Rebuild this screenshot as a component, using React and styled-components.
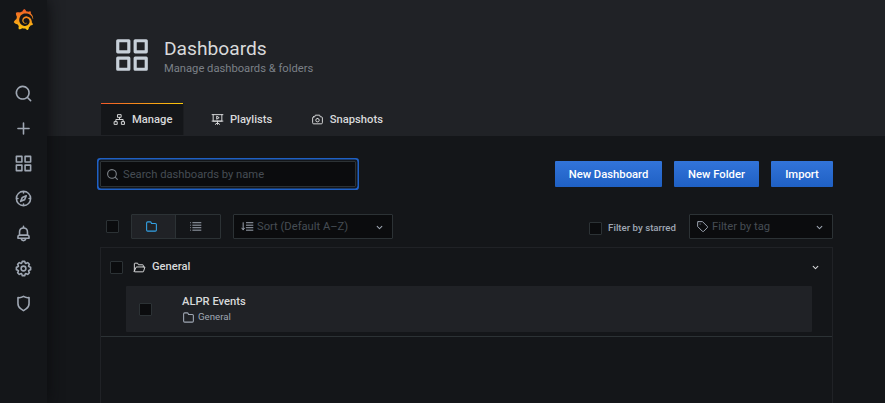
import React from "react";
import styled, { createGlobalStyle, css } from "styled-components";
import { SiGrafana } from "react-icons/si";

const Global = createGlobalStyle`
  * { box-sizing: border-box; }
  body { margin: 0; background: #141619; overflow: hidden; }
  body, button, input { font-family: Roboto, "Liberation Sans", sans-serif; }
`;

const solid = {
  search: "M21.71,20.29,18,16.61A9,9,0,1,0,16.61,18l3.68,3.68a1,1,0,0,0,1.42,0A1,1,0,0,0,21.71,20.29ZM11,18a7,7,0,1,1,7-7A7,7,0,0,1,11,18Z",
  plus: "M19,11H13V5a1,1,0,0,0-2,0v6H5a1,1,0,0,0,0,2h6v6a1,1,0,0,0,2,0V13h6a1,1,0,0,0,0-2Z",
  apps: "M10,13H3a1,1,0,0,0-1,1v7a1,1,0,0,0,1,1h7a1,1,0,0,0,1-1V14A1,1,0,0,0,10,13ZM9,20H4V15H9ZM21,2H14a1,1,0,0,0-1,1v7a1,1,0,0,0,1,1h7a1,1,0,0,0,1-1V3A1,1,0,0,0,21,2ZM20,9H15V4h5Zm1,4H14a1,1,0,0,0-1,1v7a1,1,0,0,0,1,1h7a1,1,0,0,0,1-1V14A1,1,0,0,0,21,13Zm-1,7H15V15h5ZM10,2H3A1,1,0,0,0,2,3v7a1,1,0,0,0,1,1h7a1,1,0,0,0,1-1V3A1,1,0,0,0,10,2ZM9,9H4V4H9Z",
  compass: "M12,2A10,10,0,1,0,22,12,10,10,0,0,0,12,2Zm1,17.93V19a1,1,0,0,0-2,0v.93A8,8,0,0,1,4.07,13H5a1,1,0,0,0,0-2H4.07A8,8,0,0,1,11,4.07V5a1,1,0,0,0,2,0V4.07A8,8,0,0,1,19.93,11H19a1,1,0,0,0,0,2h.93A8,8,0,0,1,13,19.93ZM15.14,7.55l-5,2.12a1,1,0,0,0-.52.52l-2.12,5a1,1,0,0,0,.21,1.1,1,1,0,0,0,.7.3.93.93,0,0,0,.4-.09l5-2.12a1,1,0,0,0,.52-.52l2.12-5a1,1,0,0,0-1.31-1.31Zm-2.49,5.1-2.28,1,1-2.28,2.28-1Z",
  bell: "M18,13.18V10a6,6,0,0,0-5-5.91V3a1,1,0,0,0-2,0V4.09A6,6,0,0,0,6,10v3.18A3,3,0,0,0,4,16v2a1,1,0,0,0,1,1H8.14a4,4,0,0,0,7.72,0H19a1,1,0,0,0,1-1V16A3,3,0,0,0,18,13.18ZM8,10a4,4,0,0,1,8,0v3H8Zm4,10a2,2,0,0,1-1.72-1h3.44A2,2,0,0,1,12,20Zm6-3H6V16a1,1,0,0,1,1-1H17a1,1,0,0,1,1,1Z",
  cog: "M21.32,9.55l-1.89-.63.89-1.78A1,1,0,0,0,20.13,6L18,3.87a1,1,0,0,0-1.15-.19l-1.78.89-.63-1.89A1,1,0,0,0,13.5,2h-3a1,1,0,0,0-.95.68L8.92,4.57,7.14,3.68A1,1,0,0,0,6,3.87L3.87,6a1,1,0,0,0-.19,1.15l.89,1.78-1.89.63A1,1,0,0,0,2,10.5v3a1,1,0,0,0,.68.95l1.89.63-.89,1.78A1,1,0,0,0,3.87,18L6,20.13a1,1,0,0,0,1.15.19l1.78-.89.63,1.89a1,1,0,0,0,.95.68h3a1,1,0,0,0,.95-.68l.63-1.89,1.78.89A1,1,0,0,0,18,20.13L20.13,18a1,1,0,0,0,.19-1.15l-.89-1.78,1.89-.63A1,1,0,0,0,22,13.5v-3A1,1,0,0,0,21.32,9.55ZM20,12.78l-1.2.4A2,2,0,0,0,17.64,16l.57,1.14-1.1,1.1L16,17.64a2,2,0,0,0-2.79,1.16l-.4,1.2H11.22l-.4-1.2A2,2,0,0,0,8,17.64l-1.14.57-1.1-1.1L6.36,16A2,2,0,0,0,5.2,13.18L4,12.78V11.22l1.2-.4A2,2,0,0,0,6.36,8L5.79,6.89l1.1-1.1L8,6.36A2,2,0,0,0,10.82,5.2l.4-1.2h1.56l.4,1.2A2,2,0,0,0,16,6.36l1.14-.57,1.1,1.1L17.64,8a2,2,0,0,0,1.16,2.79l1.2.4ZM12,8a4,4,0,1,0,4,4A4,4,0,0,0,12,8Zm0,6a2,2,0,1,1,2-2A2,2,0,0,1,12,14Z",
  shield: "M19.63,3.65a1,1,0,0,0-.84-.2,8,8,0,0,1-6.22-1.27,1,1,0,0,0-1.14,0A8,8,0,0,1,5.21,3.45a1,1,0,0,0-.84.2A1,1,0,0,0,4,4.43v7.45a9,9,0,0,0,3.77,7.33l3.65,2.6a1,1,0,0,0,1.16,0l3.65-2.6A9,9,0,0,0,20,11.88V4.43A1,1,0,0,0,19.63,3.65ZM18,11.88a7,7,0,0,1-2.93,5.7L12,19.77,8.93,17.58A7,7,0,0,1,6,11.88V5.58a10,10,0,0,0,6-1.39,10,10,0,0,0,6,1.39Z",
  folder: "M19,5.5H12.72l-.32-1a3,3,0,0,0-2.84-2H5a3,3,0,0,0-3,3v13a3,3,0,0,0,3,3H19a3,3,0,0,0,3-3V8.5A3,3,0,0,0,19,5.5Zm1,13a1,1,0,0,1-1,1H5a1,1,0,0,1-1-1V5.5a1,1,0,0,1,1-1H9.56a1,1,0,0,1,.95.68l.54,1.64A1,1,0,0,0,12,7.5h7a1,1,0,0,1,1,1Z",
  down: "M17,9.17a1,1,0,0,0-1.41,0L12,12.71,8.46,9.17a1,1,0,0,0-1.41,0,1,1,0,0,0,0,1.42l4.24,4.24a1,1,0,0,0,1.42,0L17,10.59A1,1,0,0,0,17,9.17Z",
};

const outline = {
  sitemap: "M9 3h6v5H9zM2.8 16h5v5h-5zM16.2 16h5v5h-5zM12 8v4M5.3 16v-4h13.4v4",
  play: "M2 3h20M4 3v12h16V3M2 15h20M12 15v6M8 21l4-3 4 3M10.5 6.5v5l4-2.5z",
  camera: "M5 7h2l1-3h8l1 3h2a2 2 0 0 1 2 2v9a2 2 0 0 1-2 2H5a2 2 0 0 1-2-2V9a2 2 0 0 1 2-2zM12 10a3.2 3.2 0 1 0 0 6.4 3.2 3.2 0 0 0 0-6.4z",
  list: "M3 5h.1M7 5h15M3 9.6h.1M7 9.6h15M3 14.2h.1M7 14.2h15M3 18.8h.1M7 18.8h15",
  sort: "M4 5v13M1.5 15l2.5 3 2.5-3M10 5h12M10 9.6h12M10 14.2h12M10 18.8h12",
  tag: "M4 3h8l9 9a1.5 1.5 0 0 1 0 2l-7 7a1.5 1.5 0 0 1-2 0l-9-9V4a1 1 0 0 1 1-1zM7.5 7.5h.1",
  open: "M2.5 18V5a1 1 0 0 1 1-1h5l1.5 3h8a1 1 0 0 1 1 1v3M2.5 18.5l3.5-7.5h16l-2.6 8.5a1 1 0 0 1-1 .5h-15a1 1 0 0 1-.9-1.5z",
};

const Svg = styled.svg`
  display: block;
  flex: none;
  width: ${(p) => p.$size}px;
  height: ${(p) => p.$size}px;
  color: ${(p) => p.$color || "inherit"};
`;

function Icon({ name, size = 16, color, weight = 1.8 }) {
  return (
    <Svg viewBox="0 0 24 24" $size={size} $color={color} aria-hidden="true">
      {solid[name] ? (
        <path d={solid[name]} fill="currentColor" />
      ) : (
        <path d={outline[name]} fill="none" stroke="currentColor" strokeWidth={weight} strokeLinecap="round" strokeLinejoin="round" />
      )}
    </Svg>
  );
}

const Shell = styled.div`
  display: flex;
  height: 403px;
  overflow: hidden;
  background: #141619;
  color: #d8d9da;
`;

const Sidebar = styled.nav`
  display: flex;
  flex-direction: column;
  align-items: center;
  flex: none;
  width: 47px;
  padding-top: 9px;
  background: #141619;
  box-shadow: 0 0 16px #0b0c0e;
  z-index: 1;
  color: #9fa7b3;
`;

const Logo = styled(SiGrafana)`
  width: 21px;
  height: 21px;
  margin-bottom: 46px;
  path { fill: url(#flame); }
`;

const Defs = styled.svg`
  display: block;
  width: 0;
  height: 0;
`;

const NavButton = styled.a`
  display: grid;
  place-items: center;
  width: 47px;
  height: 35px;
`;

const Main = styled.main`
  flex: 1;
  display: flex;
  flex-direction: column;
`;

const Header = styled.header`
  height: 136px;
  flex: none;
  padding-left: 54px;
  background: #202226;
`;

const Heading = styled.div`
  display: flex;
  gap: 13px;
  height: 103px;
  padding: 36px 0 0 12px;
`;

const Title = styled.h1`
  margin: 0;
  padding-top: 1px;
  font-size: 19.2px;
  font-weight: 400;
  line-height: 24px;
`;

const Subtitle = styled.div`
  font-size: 11.2px;
  line-height: 15px;
  color: #7b8087;
`;

const Tabs = styled.div`
  display: flex;
  gap: 14.5px;
`;

const Tab = styled.a`
  display: flex;
  align-items: center;
  gap: 6px;
  height: 32px;
  padding: 0 12px;
  font-size: 11.2px;
  font-weight: 500;
  ${(p) => p.$active && css`
    padding-top: 1px;
    background: linear-gradient(90deg, #f05a28, #fbca0a) top / 100% 1px no-repeat, #141619;
    box-shadow: inset -1px 0 #1b1d20;
  `}
`;

const Content = styled.section`
  flex: 1;
  display: flex;
  flex-direction: column;
  width: 733px;
  margin-left: 53px;
  padding-top: 25px;
`;

const Actions = styled.div`
  display: flex;
  align-items: center;
  gap: 12px;
  height: 26px;
`;

const Search = styled.label`
  display: flex;
  align-items: center;
  gap: 4px;
  width: 256px;
  height: 26px;
  margin-right: auto;
  padding-left: 5px;
  border: 1px solid #2c3235;
  border-radius: 1px;
  background: #0b0c0e;
  box-shadow: 0 0 0 1.5px #141619, 0 0 0 3px #1f60c4;
  color: #7b8087;
`;

const SearchInput = styled.input`
  flex: 1;
  min-width: 0;
  padding: 0;
  border: 0;
  outline: 0;
  background: none;
  font-size: 11.2px;
  &::placeholder { color: #464c54; opacity: 1; }
`;

const Primary = styled.button`
  width: ${(p) => p.$width}px;
  height: 26px;
  padding: 0;
  border: 0;
  border-radius: 1px;
  background: linear-gradient(#3274d9, #1f60c4);
  color: #fff;
  font-size: 11.25px;
  font-weight: 500;
`;

const Filters = styled.div`
  display: flex;
  align-items: center;
  height: 25px;
  margin: 27px 0 8px;
  padding-left: 6px;
`;

const Checkbox = styled.span`
  flex: none;
  width: 13px;
  height: 13px;
  border: 1px solid #2c3235;
  border-radius: 1px;
  background: #0b0c0e;
`;

const Layouts = styled.div`
  display: flex;
  width: 90px;
  height: 25px;
  margin: 0 12px;
  border: 1px solid #2c3235;
  border-radius: 1px;
`;

const LayoutButton = styled.span`
  flex: 1;
  display: grid;
  place-items: center;
  padding-right: ${(p) => (p.$active ? 4 : 5)}px;
  color: ${(p) => (p.$active ? "#33a2e5" : "#9fa7b3")};
  background: ${(p) => (p.$active ? "#202226" : "#141619")};
  border-right: ${(p) => (p.$active ? "1px solid #2c3235" : "0")};
`;

const Select = styled.div`
  display: flex;
  align-items: center;
  gap: 3px;
  width: ${(p) => p.$width}px;
  height: 25px;
  padding: 0 6px 0 ${(p) => p.$inset}px;
  border: 1px solid #2c3235;
  border-radius: 1px;
  background: #0b0c0e;
  color: #9fa7b3;
`;

const SelectText = styled.span`
  flex: 1;
  font-size: 11.2px;
  color: #464c54;
`;

const Chevron = styled.span`
  padding-top: 1px;
`;

const Starred = styled.label`
  display: flex;
  align-items: center;
  gap: 6px;
  margin: 3px 13px 0 auto;
  font-size: 9.7px;
  font-weight: 500;
  line-height: 11px;
  color: #9fa7b3;
`;

const StarredText = styled.span`
  padding-bottom: 2px;
`;

const Results = styled.div`
  flex: 1;
  border: 1px solid #202226;
  border-bottom: 0;
`;

const Folder = styled.div`
  height: 89px;
  border-bottom: 1px solid #2c3235;
`;

const FolderHead = styled.div`
  display: flex;
  align-items: center;
  height: 38px;
  padding: 0 10px 0 9px;
`;

const FolderName = styled.span`
  flex: 1;
  margin-left: 6px;
  padding-bottom: 2px;
  font-size: 11.2px;
  font-weight: 500;
`;

const HeadIcon = styled.span`
  margin-left: 10px;
`;

const Item = styled.div`
  display: flex;
  align-items: center;
  height: 46px;
  margin: 0 20px 0 25px;
  padding-left: 13px;
  border-radius: 1px;
  background: #202226;
`;

const ItemText = styled.div`
  margin-left: 30px;
`;

const ItemName = styled.div`
  font-size: 11.2px;
  font-weight: 500;
  line-height: 16px;
`;

const ItemFolder = styled.div`
  display: flex;
  align-items: center;
  gap: 3px;
  font-size: 9.7px;
  line-height: 14px;
  color: #9fa7b3;
`;

const navItems = ["search", "plus", "apps", "compass", "bell", "cog", "shield"];
const tabs = [
  { icon: "sitemap", label: "Manage", active: true },
  { icon: "play", label: "Playlists" },
  { icon: "camera", label: "Snapshots" },
];

export default function App() {
  return (
    <Shell>
      <Global />
      <Sidebar>
        <Defs>
          <linearGradient id="flame" x1="0" y1="1" x2="0" y2="0">
            <stop offset="0" stopColor="#fcc90f" />
            <stop offset="1" stopColor="#f05a28" />
          </linearGradient>
        </Defs>
        <Logo />
        {navItems.map((name) => (
          <NavButton key={name}><Icon name={name} size={19} /></NavButton>
        ))}
      </Sidebar>
      <Main>
        <Header>
          <Heading>
            <Icon name="apps" size={38} color="#c7d0d9" />
            <div>
              <Title>Dashboards</Title>
              <Subtitle>Manage dashboards &amp; folders</Subtitle>
            </div>
          </Heading>
          <Tabs>
            {tabs.map((t) => (
              <Tab key={t.label} $active={t.active}>
                <Icon name={t.icon} size={13} />
                {t.label}
              </Tab>
            ))}
          </Tabs>
        </Header>
        <Content>
          <Actions>
            <Search>
              <Icon name="search" size={13} />
              <SearchInput placeholder="Search dashboards by name" />
            </Search>
            <Primary $width={107}>New Dashboard</Primary>
            <Primary $width={85}>New Folder</Primary>
            <Primary $width={62}>Import</Primary>
          </Actions>
          <Filters>
            <Checkbox />
            <Layouts>
              <LayoutButton $active><Icon name="folder" size={13} /></LayoutButton>
              <LayoutButton><Icon name="list" size={13} /></LayoutButton>
            </Layouts>
            <Select $width={160} $inset={7}>
              <Icon name="sort" size={13} />
              <SelectText>Sort (Default A–Z)</SelectText>
              <Chevron><Icon name="down" size={13} /></Chevron>
            </Select>
            <Starred><Checkbox /><StarredText>Filter by starred</StarredText></Starred>
            <Select $width={144} $inset={6}>
              <Icon name="tag" size={13} />
              <SelectText>Filter by tag</SelectText>
              <Chevron><Icon name="down" size={13} /></Chevron>
            </Select>
          </Filters>
          <Results>
            <Folder>
              <FolderHead>
                <Checkbox />
                <HeadIcon><Icon name="open" size={13} /></HeadIcon>
                <FolderName>General</FolderName>
                <Icon name="down" size={13} />
              </FolderHead>
              <Item>
                <Checkbox />
                <ItemText>
                  <ItemName>ALPR Events</ItemName>
                  <ItemFolder><Icon name="folder" size={13} />General</ItemFolder>
                </ItemText>
              </Item>
            </Folder>
          </Results>
        </Content>
      </Main>
    </Shell>
  );
}
